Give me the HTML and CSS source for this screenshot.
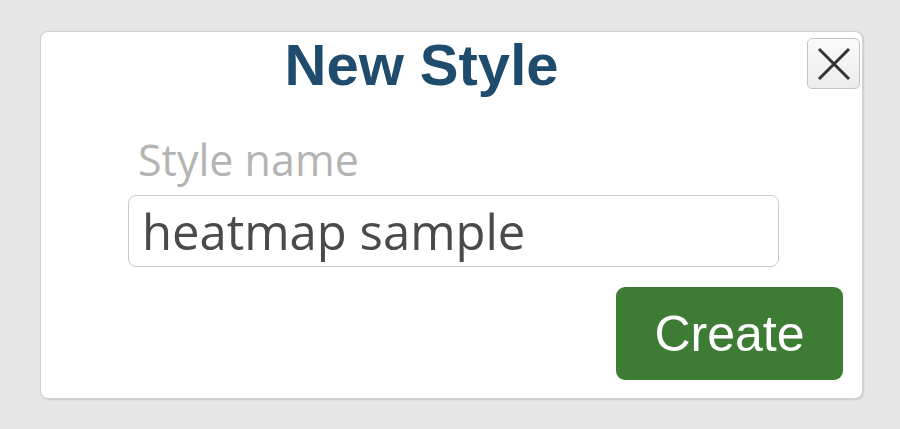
FILE: index.html
```
<html>
  <head>
    <link rel="stylesheet" href="styles.css">
    <title>New Style</title>
  </head>
  <body>
    <div class="dialog">
      <h1 class="title">New Style</h1>
      <button class="close" title="Close">
        <svg width="34" height="34" viewBox="0 0 34 34">
          <path d="M2 2 L32 32 M32 2 L2 32" stroke="#333" stroke-width="3" fill="none" />
        </svg>
      </button>
      <form class="form">
        <label class="label" for="name">Style name</label>
        <input class="field" id="name" type="text" value="heatmap sample" />
        <div class="actions">
          <button class="create" type="submit">Create</button>
        </div>
      </form>
    </div>
  </body>
</html>
```

FILE: styles.css
```
body {
  margin: 0;
  padding: 31px 0 0 40px;
  background: #e6e6e6;
}

.dialog {
  position: relative;
  box-sizing: border-box;
  width: 823px;
  height: 368px;
  background: #fff;
  border: 1px solid #cfcfcf;
  border-radius: 8px;
  box-shadow: 1px 1px 2px rgba(0, 0, 0, 0.12);
  padding: 0 19px 18px 0;
}

.title {
  margin: 0;
  padding-right: 41px;
  text-align: center;
  font-family: "Liberation Sans", Arial, sans-serif;
  font-weight: bold;
  font-size: 58px;
  line-height: 66px;
  color: #1f4b6c;
}

.close {
  position: absolute;
  top: 6px;
  right: 2px;
  width: 53px;
  height: 51px;
  padding: 0;
  display: flex;
  align-items: center;
  justify-content: center;
  border: 1px solid #c4c4c4;
  border-radius: 5px;
  background: linear-gradient(#fafafa, #ececec);
}

.form {
  margin: 35px 0 0 87px;
  display: flex;
  flex-direction: column;
}

.label {
  padding-left: 10px;
  font-family: "Open Sans", sans-serif;
  font-size: 43px;
  line-height: 54px;
  color: #b4b4b4;
}

.field {
  box-sizing: border-box;
  width: 651px;
  height: 72px;
  margin-top: 8px;
  padding: 0 13px;
  border: 1px solid #c9c9c9;
  border-radius: 8px;
  font-family: "Open Sans", sans-serif;
  font-size: 49px;
  color: #4a4a4a;
  outline: none;
}

.actions {
  display: flex;
  justify-content: flex-end;
  margin-top: 20px;
}

.create {
  width: 227px;
  height: 93px;
  border: none;
  border-radius: 9px;
  background: #3e7b35;
  color: #fff;
  font-family: "Liberation Sans", Arial, sans-serif;
  font-size: 50px;
  padding: 0;
}
```
